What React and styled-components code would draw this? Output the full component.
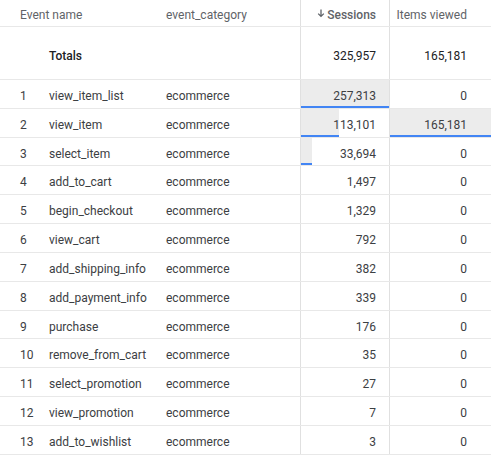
import React from 'react';
import styled, { createGlobalStyle } from 'styled-components';

const GlobalStyle = createGlobalStyle`
  body {
    margin: 0;
    background: #fff;
    font-family: Roboto, "Liberation Sans", sans-serif;
  }
`;

const rows = [
  ['view_item_list', 257313, 0],
  ['view_item', 113101, 165181],
  ['select_item', 33694, 0],
  ['add_to_cart', 1497, 0],
  ['begin_checkout', 1329, 0],
  ['view_cart', 792, 0],
  ['add_shipping_info', 382, 0],
  ['add_payment_info', 339, 0],
  ['purchase', 176, 0],
  ['remove_from_cart', 35, 0],
  ['select_promotion', 27, 0],
  ['view_promotion', 7, 0],
  ['add_to_wishlist', 3, 0],
];

const maxSessions = 257313;
const maxItems = 165181;

const Table = styled.div`
  width: 491px;
  font-size: 12px;
  color: #3c4043;
`;

const Row = styled.div`
  display: grid;
  grid-template-columns: 49px 117px 134px 89px 102px;
  height: ${(p) => p.$h}px;
  border-bottom: 1px solid #e8e8e8;
  box-sizing: border-box;

  & > * {
    padding-top: ${(p) => p.$pt}px;
  }
`;

const Cell = styled.div`
  display: flex;
  align-items: center;
  justify-content: ${(p) => (p.$right ? 'flex-end' : 'flex-start')};
  padding-left: ${(p) => (p.$pl != null ? p.$pl : 0)}px;
  padding-right: ${(p) => (p.$pr != null ? p.$pr : 0)}px;
  white-space: nowrap;
  border-left: ${(p) => (p.$line ? '1px solid #e0e0e0' : 'none')};
`;

const HeadText = styled.span`
  color: #5f6368;
  font-weight: ${(p) => (p.$bold ? 500 : 400)};
  display: inline-flex;
  align-items: center;
  gap: 2px;
`;

const TotalText = styled.span`
  color: #202124;
  font-weight: ${(p) => (p.$bold ? 500 : 400)};
`;

const BarCell = styled(Cell)`
  background:
    linear-gradient(#4285f4, #4285f4) left bottom / ${(p) => p.$w}px 2px no-repeat,
    linear-gradient(#ececec, #ececec) left top / ${(p) => p.$w}px 100% no-repeat;
`;

const fmt = (n) => n.toLocaleString('en-US');
const barWidth = (v, max, full) => Math.floor((v / max) * full);

function SortArrow() {
  return (
    <svg width="8" height="9" viewBox="0 0 8 9" style={{ marginTop: -3 }}>
      <path d="M4 0.5v6.5M1.2 4.6L4 7.4l2.8-2.8" stroke="#5f6368" strokeWidth="1.3" fill="none" />
    </svg>
  );
}

export default function App() {
  return (
    <>
      <GlobalStyle />
      <Table>
        <Row $h={27} $pt={3}>
          <Cell $pl={20}><HeadText>Event name</HeadText></Cell>
          <Cell />
          <Cell><HeadText>event_category</HeadText></Cell>
          <Cell $line $right $pr={13}>
            <HeadText $bold><SortArrow />Sessions</HeadText>
          </Cell>
          <Cell $line $right $pr={24}><HeadText>Items viewed</HeadText></Cell>
        </Row>
        <Row $h={53} $pt={6}>
          <Cell />
          <Cell><TotalText $bold>Totals</TotalText></Cell>
          <Cell />
          <Cell $line $right $pr={13}><TotalText>325,957</TotalText></Cell>
          <Cell $line $right $pr={24}><TotalText>165,181</TotalText></Cell>
        </Row>
        {rows.map(([name, sessions, items], i) => (
          <Row key={name} $h={28.83} $pt={4}>
            <Cell $pl={20}>{i + 1}</Cell>
            <Cell>{name}</Cell>
            <Cell>ecommerce</Cell>
            <BarCell $line $right $pr={13} $w={barWidth(sessions, maxSessions, 88)}>
              {fmt(sessions)}
            </BarCell>
            <BarCell $line $right $pr={24} $w={barWidth(items, maxItems, 101)}>
              {fmt(items)}
            </BarCell>
          </Row>
        ))}
      </Table>
    </>
  );
}
